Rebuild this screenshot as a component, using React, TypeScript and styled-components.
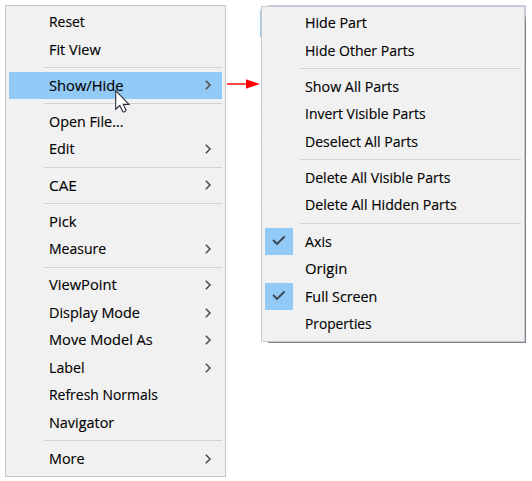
import React from 'react';
import styled, { createGlobalStyle } from 'styled-components';

const GlobalStyle = createGlobalStyle`
  *, *::before, *::after { box-sizing: border-box; }
  body {
    margin: 0;
    background: #fff;
    overflow: hidden;
    font-family: "Open Sans", "Noto Sans", sans-serif;
  }
`;

const Page = styled.main`
  display: flex;
  align-items: flex-start;
  width: 532px;
  height: 481px;
  padding: 5px 0 0 5px;
`;

const Menu = styled.ul`
  flex: none;
  width: 221px;
  height: 472px;
  margin: 0;
  padding: 2px 3px;
  list-style: none;
  background: #f1f1f1;
  border: 1px solid #c6c6c6;
`;

const SubmenuFrame = styled.div`
  position: relative;
  flex: none;
  width: 265px;
  height: 338px;
`;

const SubmenuShadow = styled.div`
  position: absolute;
  left: 7px;
  top: 0;
  right: 0;
  bottom: 0;
  background: linear-gradient(#c8c8ee 8px, #7d7d8b 16px);
`;

const ActiveEdge = styled.div`
  position: absolute;
  left: -1px;
  top: 5px;
  width: 1px;
  height: 27px;
  background: #91c9f7;
`;

const SeparatorEnd = styled.div<{ $y: number }>`
  position: absolute;
  left: -1px;
  top: ${p => p.$y}px;
  width: 1px;
  height: 1px;
  background: #d6d6d6;
`;

const Submenu = styled(Menu)`
  position: relative;
  top: 1px;
  width: 264px;
  height: 336px;
  padding-top: 2px;
  border-color: #cbcbcb;
`;

const Item = styled.li<{ $active?: boolean }>`
  display: flex;
  align-items: center;
  height: 27.5px;
  background: ${p => (p.$active ? '#91c9f7' : 'transparent')};
`;

const IconSlot = styled.span<{ $checked?: boolean }>`
  display: flex;
  flex: none;
  align-items: center;
  justify-content: center;
  width: 27.5px;
  height: 27.5px;
  margin-right: 12px;
  background: ${p => (p.$checked ? '#91c9f7' : 'transparent')};
`;

const Label = styled.span<{ $stretch: number }>`
  flex: none;
  margin-bottom: 1.4px;
  color: #000;
  font-size: 15px;
  line-height: 20px;
  white-space: nowrap;
  -webkit-text-stroke: 0.15px #000;
  transform: scaleX(${p => p.$stretch});
  transform-origin: left center;
`;

const Chevron = styled.svg`
  flex: none;
  width: 8px;
  height: 12px;
  margin: 0 10px 0 auto;
`;

const Separator = styled.li`
  display: flex;
  align-items: center;
  height: 8.7px;
  padding-left: 35px;

  &::before {
    content: "";
    flex: 1;
    height: 1px;
    background: #d2d2d2;
  }
`;

const Connector = styled.svg`
  flex: none;
  width: 35px;
  height: 14px;
  margin-top: 72px;
`;

const Cursor = styled.svg`
  position: absolute;
  left: 114px;
  top: 89px;
  width: 17px;
  height: 26px;
`;

type Entry =
  | { label: string; stretch: number; sub?: boolean; active?: boolean; checked?: boolean }
  | null;

const mainItems: Entry[] = [
  { label: 'Reset', stretch: 0.927 },
  { label: 'Fit View', stretch: 0.965 },
  null,
  { label: 'Show/Hide', stretch: 0.98, sub: true, active: true },
  null,
  { label: 'Open File...', stretch: 0.955 },
  { label: 'Edit', stretch: 0.96, sub: true },
  null,
  { label: 'CAE', stretch: 1.02, sub: true },
  null,
  { label: 'Pick', stretch: 0.99 },
  { label: 'Measure', stretch: 0.935, sub: true },
  null,
  { label: 'ViewPoint', stretch: 0.98, sub: true },
  { label: 'Display Mode', stretch: 0.961, sub: true },
  { label: 'Move Model As', stretch: 0.972, sub: true },
  { label: 'Label', stretch: 0.945, sub: true },
  { label: 'Refresh Normals', stretch: 0.929 },
  { label: 'Navigator', stretch: 0.96 },
  null,
  { label: 'More', stretch: 0.96, sub: true },
];

const subItems: Entry[] = [
  { label: 'Hide Part', stretch: 0.95 },
  { label: 'Hide Other Parts', stretch: 0.935 },
  null,
  { label: 'Show All Parts', stretch: 0.95 },
  { label: 'Invert Visible Parts', stretch: 0.931 },
  { label: 'Deselect All Parts', stretch: 0.938 },
  null,
  { label: 'Delete All Visible Parts', stretch: 0.938 },
  { label: 'Delete All Hidden Parts', stretch: 0.943 },
  null,
  { label: 'Axis', stretch: 0.95, checked: true },
  { label: 'Origin', stretch: 0.99 },
  { label: 'Full Screen', stretch: 0.952, checked: true },
  { label: 'Properties', stretch: 0.918 },
];

const Entries = ({ entries }: { entries: Entry[] }) => (
  <>
    {entries.map((entry, i) =>
      entry === null ? (
        <Separator key={i} role="separator" />
      ) : (
        <Item key={i} $active={entry.active}>
          <IconSlot $checked={entry.checked}>
            {entry.checked && (
              <svg width="14" height="12" viewBox="0 0 14 12" fill="none">
                <path d="M1.1 5 5 8.9 12.6 1.5" stroke="#3c4650" strokeWidth="1.9" />
              </svg>
            )}
          </IconSlot>
          <Label $stretch={entry.stretch}>{entry.label}</Label>
          {entry.sub && (
            <Chevron viewBox="0 0 8 12" fill="none">
              <path d="M1.8 1.8 6 6 1.8 10.2" stroke="#505050" strokeWidth="1.6" />
            </Chevron>
          )}
        </Item>
      ),
    )}
  </>
);

export default function App() {
  return (
    <>
      <GlobalStyle />
      <Page>
        <Menu>
          <Entries entries={mainItems} />
        </Menu>
        <Connector viewBox="0 0 35 14">
          <path d="M1 7H22" stroke="#ff0a0a" strokeWidth="1.5" />
          <path d="M20 2.3 34 7 20 11.7Z" fill="#ff0000" />
        </Connector>
        <SubmenuFrame>
          <ActiveEdge />
          {[36, 100, 136, 200].map(y => (
            <SeparatorEnd key={y} $y={y} />
          ))}
          <SubmenuShadow />
          <Submenu>
            <Entries entries={subItems} />
          </Submenu>
        </SubmenuFrame>
      </Page>
      <Cursor viewBox="0 0 17 26">
        <path
          d="M1.7 1.5V20.2L5.8 16.5 8.9 22.8Q10.8 23.6 12.1 21.2L9.3 15.4H15Z"
          fill="#fff"
          stroke="#2b2b38"
          strokeWidth="1.1"
        />
      </Cursor>
    </>
  );
}
